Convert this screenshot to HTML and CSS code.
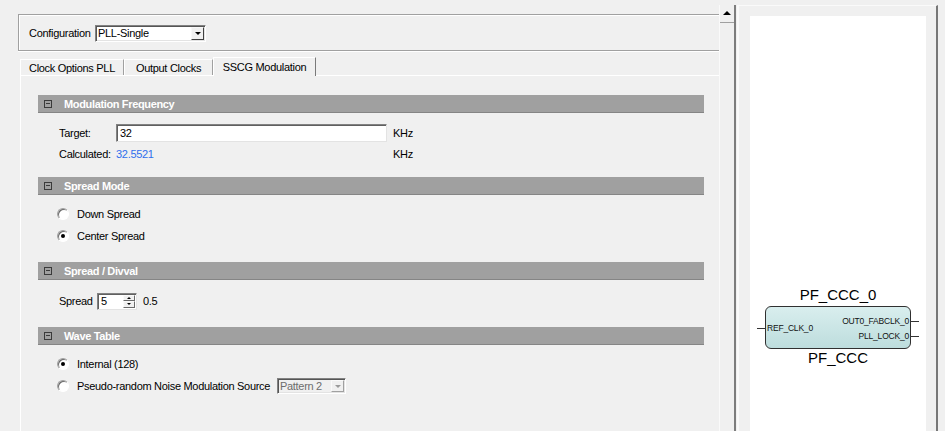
FILE: index.html
```html
<!DOCTYPE html>
<html lang="en">
<head>
    <meta charset="UTF-8">
    <meta name="viewport" content="width=device-width, initial-scale=1.0">
    <title>PF_CCC Configurator</title>
    <link rel="stylesheet" href="styles.css">
</head>
<body>
    <div class="app">
        <div class="editor">
            <div class="config-group">
                <span class="config-label">Configuration</span>
                <div class="combo config-combo">
                    <span class="combo-text">PLL-Single</span>
                    <span class="combo-btn"><span class="arrow-down"></span></span>
                </div>
            </div>

            <div class="tabs">
                <div class="tab tab-clock">Clock Options PLL</div>
                <div class="tab tab-output">Output Clocks</div>
                <div class="tab tab-sscg active">SSCG Modulation</div>
            </div>

            <div class="tab-panel">
                <!-- Modulation Frequency -->
                <div class="section">
                    <div class="section-head"><span class="collapse"></span>Modulation Frequency</div>
                    <div class="section-body freq-body">
                        <div class="field-row">
                            <span class="field-label">Target:</span>
                            <input class="text-input" type="text" value="32">
                            <span class="unit">KHz</span>
                        </div>
                        <div class="field-row calc-row">
                            <span class="field-label">Calculated:</span>
                            <span class="calc-value">32.5521</span>
                            <span class="unit">KHz</span>
                        </div>
                    </div>
                </div>

                <!-- Spread Mode -->
                <div class="section">
                    <div class="section-head"><span class="collapse"></span>Spread Mode</div>
                    <div class="section-body radio-body">
                        <div class="radio-row"><span class="radio"></span>Down Spread</div>
                        <div class="radio-row"><span class="radio checked"></span>Center Spread</div>
                    </div>
                </div>

                <!-- Spread / Divval -->
                <div class="section">
                    <div class="section-head"><span class="collapse"></span>Spread / Divval</div>
                    <div class="section-body spread-body">
                        <div class="field-row">
                            <span class="spread-label">Spread</span>
                            <div class="spin">
                                <span class="spin-text">5</span>
                                <span class="spin-btns">
                                    <span class="spin-btn"><span class="tiny-up"></span></span>
                                    <span class="spin-btn"><span class="tiny-down"></span></span>
                                </span>
                            </div>
                            <span class="spread-value">0.5</span>
                        </div>
                    </div>
                </div>

                <!-- Wave Table -->
                <div class="section">
                    <div class="section-head"><span class="collapse"></span>Wave Table</div>
                    <div class="section-body wave-body">
                        <div class="radio-row"><span class="radio checked"></span>Internal (128)</div>
                        <div class="radio-row">
                            <span class="radio"></span>
                            <span class="pseudo-label">Pseudo-random Noise Modulation Source</span>
                            <div class="combo pattern-combo disabled">
                                <span class="combo-text">Pattern 2</span>
                                <span class="combo-btn"><span class="arrow-down"></span></span>
                            </div>
                        </div>
                    </div>
                </div>
            </div>
        </div>

        <div class="scrollbar">
            <div class="scroll-up"><span class="arrow-up"></span></div>
        </div>

        <div class="preview">
            <div class="frame">
                <div class="canvas">
                    <div class="node">
                        <div class="node-title">PF_CCC_0</div>
                        <div class="node-box">
                            <span class="port port-in">REF_CLK_0</span>
                            <span class="port port-out port-out1">OUT0_FABCLK_0</span>
                            <span class="port port-out port-out2">PLL_LOCK_0</span>
                        </div>
                        <div class="node-type">PF_CCC</div>
                    </div>
                </div>
            </div>
        </div>
    </div>
</body>
</html>
```

FILE: styles.css
```css
* {
    box-sizing: border-box;
}

body {
    margin: 0;
    background: #f0f0f0;
    font-family: "Liberation Sans", Arial, sans-serif;
    font-size: 11px;
    letter-spacing: -0.3px;
    color: #000;
    overflow: hidden;
}

.app {
    display: flex;
    height: 431px;
}

/* left editor */
.editor {
    width: 719px;
    display: flex;
    flex-direction: column;
    padding: 14px 0 0 18px;
}

.config-group {
    height: 37px;
    display: flex;
    align-items: center;
    padding: 1px 0 0 10px;
    border: 1px solid #a0a0a0;
    border-right: none;
    box-shadow: inset 1px 1px 0 #fff, 0 1px 0 #fff;
}

.config-label {
    width: 66px;
}

.combo {
    position: relative;
    display: flex;
    align-items: center;
    background: #fff;
    border: 1px solid;
    border-color: #828282 #fff #fff #828282;
    box-shadow: inset 1px 1px 0 #555, inset -1px -1px 0 #e3e3e3;
}

.config-combo {
    width: 111px;
    height: 17px;
}

.combo-text {
    padding-left: 2px;
}

.combo-btn {
    position: absolute;
    right: 1px;
    top: 1px;
    bottom: 1px;
    width: 13px;
    display: flex;
    align-items: center;
    justify-content: center;
    background: #f0f0f0;
    border: 1px solid;
    border-color: #f8f8f8 #404040 #404040 #f8f8f8;
}

.arrow-down {
    width: 0;
    height: 0;
    border-left: 3px solid transparent;
    border-right: 3px solid transparent;
    border-top: 3px solid #000;
}

.arrow-up {
    width: 0;
    height: 0;
    border-left: 4px solid transparent;
    border-right: 4px solid transparent;
    border-bottom: 4px solid #000;
}

/* tabs */
.tabs {
    display: flex;
    align-items: flex-end;
    height: 18px;
    margin: 6px 0 0 2px;
}

.tab {
    height: 16px;
    display: flex;
    align-items: center;
    justify-content: center;
    padding-top: 1px;
    border-top: 1px solid #fff;
    border-left: 1px solid #fff;
    border-right: 1px solid #a0a0a0;
    white-space: nowrap;
}

.tab-clock {
    width: 104px;
}

.tab-output {
    width: 89px;
}

.tab-sscg {
    width: 103px;
}

.tab.active {
    position: relative;
    z-index: 1;
    height: 19px;
    margin-bottom: -1px;
    padding: 0 0 1px;
    background: #f0f0f0;
    border-right: 1px solid #7a7a7a;
}

.tab-panel {
    flex: 1;
    margin-left: 2px;
    padding: 19px 15px 0 17px;
    border-top: 1px solid #fff;
    border-left: 1px solid #fff;
}

/* sections */
.section-head {
    height: 18px;
    display: flex;
    align-items: center;
    background: #a0a0a0;
    border-bottom: 1px solid #858585;
    color: #fff;
    font-weight: bold;
    letter-spacing: -0.35px;
}

.collapse {
    position: relative;
    width: 8px;
    height: 8px;
    margin: 0 12px 0 6px;
    border: 1px solid #3a3a3a;
}

.collapse::after {
    content: "";
    position: absolute;
    left: 1px;
    top: 2px;
    width: 4px;
    height: 1px;
    background: #3a3a3a;
}

.section-body {
    padding-left: 21px;
}

.freq-body {
    padding-top: 11px;
    padding-bottom: 15px;
}

.radio-body {
    padding-top: 11px;
    padding-bottom: 18px;
}

.spread-body {
    padding-top: 12px;
    padding-bottom: 17px;
}

.wave-body {
    padding-top: 11px;
}

.field-row {
    display: flex;
    align-items: center;
    height: 18px;
}

.calc-row {
    height: 16px;
    margin-top: 4px;
}

.field-label {
    width: 57px;
}

.text-input {
    width: 271px;
    height: 18px;
    margin: 0;
    padding: 0 3px;
    font: inherit;
    letter-spacing: inherit;
    background: #fff;
    border: 1px solid;
    border-color: #828282 #e3e3e3 #e3e3e3 #828282;
    box-shadow: inset 1px 1px 0 #606060;
    outline: none;
}

.calc-value {
    width: 271px;
    color: #2f6fed;
}

.unit {
    margin-left: 6px;
}

.radio-row {
    display: flex;
    align-items: center;
    height: 16px;
    margin-left: -2px;
}

.radio-row + .radio-row {
    margin-top: 6px;
}

.radio {
    position: relative;
    width: 12px;
    height: 12px;
    margin-right: 8px;
    border-radius: 50%;
    background: #fff;
    border: 1px solid;
    border-color: #a0a0a0 #fff #fff #a0a0a0;
    box-shadow: inset 1px 1px 0 #6a6a6a;
}

.radio.checked::after {
    content: "";
    position: absolute;
    left: 3px;
    top: 3px;
    width: 4px;
    height: 4px;
    border-radius: 50%;
    background: #000;
}

.spread-label {
    width: 38px;
}

.spin {
    position: relative;
    width: 40px;
    height: 17px;
    display: flex;
    align-items: center;
    background: #fff;
    border: 1px solid;
    border-color: #828282 #e3e3e3 #e3e3e3 #828282;
    box-shadow: inset 1px 1px 0 #606060;
}

.spin-text {
    padding-left: 3px;
}

.spin-btns {
    position: absolute;
    right: 1px;
    top: 1px;
    bottom: 1px;
    width: 12px;
    display: flex;
    flex-direction: column;
}

.spin-btn {
    flex: 1;
    display: flex;
    align-items: center;
    justify-content: center;
    background: #f0f0f0;
    border: 1px solid;
    border-color: #fafafa #6a6a6a #6a6a6a #fafafa;
}

.tiny-up,
.tiny-down {
    width: 0;
    height: 0;
    border-left: 2px solid transparent;
    border-right: 2px solid transparent;
}

.tiny-up {
    border-bottom: 2px solid #000;
}

.tiny-down {
    border-top: 2px solid #000;
}

.spread-value {
    margin-left: 6px;
}

.pseudo-label {
    width: 200px;
    white-space: nowrap;
}

.pattern-combo {
    width: 69px;
    height: 16px;
    background: #f0f0f0;
    color: #6d6d6d;
}

.pattern-combo .combo-btn {
    border-color: #fafafa #a0a0a0 #a0a0a0 #fafafa;
}

.pattern-combo .arrow-down {
    border-top-color: #9a9a9a;
}

/* scrollbar */
.scrollbar {
    width: 17px;
    margin-top: 5px;
    border-left: 1px solid #fafafa;
    border-right: 2px solid #7d7d7d;
}

.scroll-up {
    height: 17px;
    margin-top: 1px;
    display: flex;
    align-items: center;
    justify-content: center;
    border-bottom: 1px solid #a0a0a0;
    padding-bottom: 2px;
}

/* preview */
.preview {
    flex: 1;
    padding: 5px 0 0 1px;
}

.frame {
    width: 201px;
    height: 100%;
    padding: 10px 9px 0 11px;
    border-top: 1px solid #fafafa;
    border-left: 2px solid #fafafa;
    border-right: 2px solid #777;
}

.canvas {
    position: relative;
    width: 176px;
    height: 100%;
    background: #fff;
}

.node {
    position: absolute;
    left: 15px;
    top: 270px;
    width: 146px;
    letter-spacing: 0;
}

.node-title,
.node-type {
    height: 18px;
    line-height: 18px;
    text-align: center;
    font-size: 15px;
}

.node-title {
    margin-bottom: 2px;
}

.node-box {
    position: relative;
    height: 43px;
    border: 1.5px solid #303030;
    border-radius: 6px;
    background: linear-gradient(#d9eeee, #bddddd);
}

.port {
    position: absolute;
    font-size: 8.5px;
    line-height: 10px;
    letter-spacing: -0.2px;
    color: #111;
}

.port-in {
    left: 1px;
    top: 16px;
}

.port-in::before {
    content: "";
    position: absolute;
    left: -10px;
    top: 5px;
    width: 9px;
    height: 1px;
    background: #333;
}

.port-out {
    right: 1px;
}

.port-out::after {
    content: "";
    position: absolute;
    right: -10px;
    top: 5px;
    width: 9px;
    height: 1px;
    background: #333;
}

.port-out1 {
    top: 9px;
}

.port-out2 {
    top: 24px;
}
```
